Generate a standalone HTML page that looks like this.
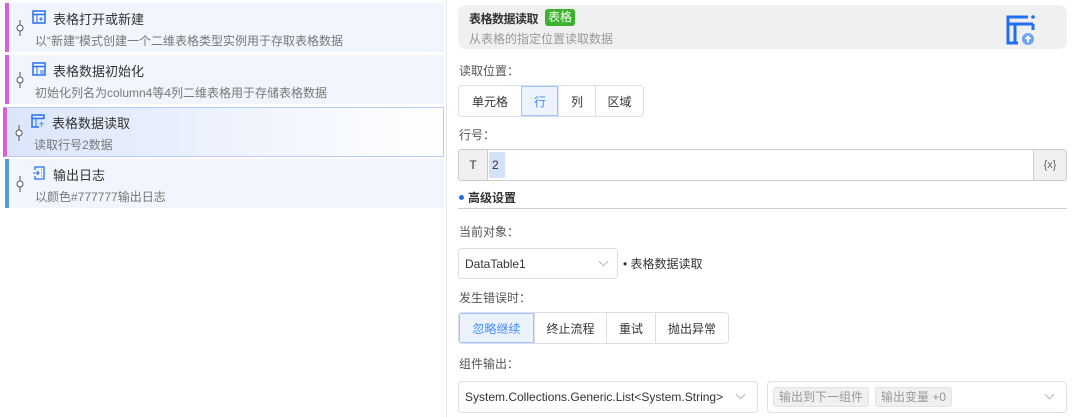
<!DOCTYPE html>
<html><head><meta charset="utf-8"><style>
*{box-sizing:border-box;margin:0;padding:0}
body{width:1073px;height:417px;overflow:hidden;background:#fff;font-family:"Liberation Sans","Noto Sans CJK SC",sans-serif;font-size:12px;color:#333;position:relative}
.item{position:absolute;left:5px;width:439px;height:49px;background:#f1f5fd;border-left:4px solid #d562d8}
.item .t{position:absolute;left:44px;top:6px;font-size:13px;color:#333}
.item .d{position:absolute;left:26px;top:29px;font-size:12px;color:#777}
.item .ic{position:absolute;left:23px;top:7px;width:14px;height:14px}
.pin{position:absolute;left:7px;top:17px;width:8px;height:16px}
.sel{background:linear-gradient(90deg,#dbe6fb,#fff);border:1px solid #b8c9f3;border-left:4px solid #d562d8}
.abs{position:absolute}
.lbl{position:absolute;left:459px;font-size:12px;color:#555}
.box{position:absolute;border:1px solid #dcdfe6;border-radius:4px;background:#fff}
.seg{position:absolute;display:flex;border:1px solid #dcdfe6;border-radius:4px;overflow:hidden;background:#fff}
.seg div{flex:none;border-left:1px solid #dcdfe6;display:flex;align-items:center;justify-content:center;font-size:12px;color:#333}
.seg div:first-child{border-left:none}
.seg .on{background:#ecf3ff;color:#3f8cff;outline:1px solid #a0c4ff;outline-offset:-1px}
.chev{position:absolute;width:7px;height:7px;border-right:1px solid #bbb;border-bottom:1px solid #bbb;transform:rotate(45deg)}
.tag{position:absolute;background:#f0f0f0;border:1px solid #e2e2e2;border-radius:3px;color:#999;font-size:12px;height:20px;line-height:18px;text-align:center;white-space:nowrap}
</style></head><body>
<div style="position:absolute;left:446px;top:0;width:1px;height:417px;background:#e8e8e8"></div>

<div class="item" style="top:3px">
<svg class="pin" viewBox="0 0 8 16"><line x1="4" y1="0" x2="4" y2="16" stroke="#555"/><circle cx="4" cy="8" r="3" fill="#fff" stroke="#555"/></svg>
<svg class="ic" viewBox="0 0 14 14"><rect x="1" y="1" width="12" height="12" fill="none" stroke="#2a6ef0" stroke-width="1.5"/><line x1="1" y1="4.5" x2="13" y2="4.5" stroke="#2a6ef0" stroke-width="1.5"/><line x1="5" y1="4.5" x2="5" y2="13" stroke="#2a6ef0"/><path d="M7 9h4M9 7v4" stroke="#2a6ef0"/></svg>
<div class="t">表格打开或新建</div><div class="d">以“新建”模式创建一个二维表格类型实例用于存取表格数据</div></div>

<div class="item" style="top:55px">
<svg class="pin" viewBox="0 0 8 16"><line x1="4" y1="0" x2="4" y2="16" stroke="#555"/><circle cx="4" cy="8" r="3" fill="#fff" stroke="#555"/></svg>
<svg class="ic" viewBox="0 0 14 14"><rect x="1" y="1" width="12" height="12" fill="none" stroke="#2a6ef0" stroke-width="1.5"/><line x1="1" y1="4.5" x2="13" y2="4.5" stroke="#2a6ef0" stroke-width="1.5"/><line x1="5" y1="4.5" x2="5" y2="13" stroke="#2a6ef0"/><rect x="8" y="8" width="4" height="4" fill="#8ab4f8"/></svg>
<div class="t">表格数据初始化</div><div class="d">初始化列名为column4等4列二维表格用于存储表格数据</div></div>

<div class="item sel" style="top:107px;height:50px;left:3px;width:441px">
<svg class="pin" viewBox="0 0 8 16" style="left:8px"><line x1="4" y1="0" x2="4" y2="16" stroke="#555"/><circle cx="4" cy="8" r="3" fill="#fff" stroke="#555"/></svg>
<svg class="ic" viewBox="0 0 14 14" style="left:24px;top:6px"><path d="M13 5V1H1v12h7" fill="none" stroke="#2a6ef0" stroke-width="1.5"/><line x1="1" y1="4.5" x2="13" y2="4.5" stroke="#2a6ef0" stroke-width="1.5"/><line x1="5" y1="4.5" x2="5" y2="13" stroke="#2a6ef0"/><path d="M10.5 13V8.5M8.5 10.5l2-2 2 2" stroke="#5a9af5" fill="none"/></svg>
<div class="t" style="left:45px;top:5px">表格数据读取</div><div class="d" style="left:27px;top:28px">读取行号2数据</div></div>

<div class="item" style="top:159px;border-left-color:#5b9ad8">
<svg class="pin" viewBox="0 0 8 16"><line x1="4" y1="0" x2="4" y2="16" stroke="#555"/><circle cx="4" cy="8" r="3" fill="#fff" stroke="#555"/></svg>
<svg class="ic" viewBox="0 0 14 14"><path d="M3 4V1h9v12H3v-3" fill="none" stroke="#2a6ef0" stroke-width="1.3"/><path d="M1 7h6M5 5l2 2-2 2M9 4h1M9 7h1M9 10h1" stroke="#2a6ef0" fill="none"/></svg>
<div class="t">输出日志</div><div class="d">以颜色#777777输出日志</div></div>

<div class="abs" style="left:458px;top:5px;width:609px;height:44px;background:#f0f0f0;border-radius:8px"></div>
<div class="abs" style="left:469px;top:10px;font-size:12px;font-weight:bold;color:#333;letter-spacing:-0.5px">表格数据读取</div>
<div class="abs" style="left:545px;top:9px;background:#3cb22e;color:#fff;font-size:12px;height:17px;line-height:17px;padding:0 3px;border-radius:3px">表格</div>
<div class="abs" style="left:469px;top:30px;font-size:12px;color:#999">从表格的指定位置读取数据</div>
<svg class="abs" style="left:1006px;top:14px" width="31" height="31" viewBox="0 0 31 31"><path d="M22 3H2v26h10" fill="none" stroke="#1f6ff5" stroke-width="3"/><line x1="2" y1="10" x2="27" y2="10" stroke="#1f6ff5" stroke-width="3"/><line x1="9" y1="10" x2="9" y2="29" stroke="#1f6ff5" stroke-width="3"/><circle cx="27" cy="3" r="1.8" fill="#1f6ff5"/><line x1="27" y1="10" x2="27" y2="16" stroke="#1f6ff5" stroke-width="3"/><circle cx="22" cy="25" r="6" fill="#6ea2f7"/><path d="M22 28.5v-6M19.5 25l2.5-2.5 2.5 2.5" stroke="#fff" stroke-width="1.8" fill="none"/></svg>

<div class="lbl" style="top:62px">读取位置：</div>
<div class="seg" style="left:458px;top:85px;height:32px">
<div style="width:62px">单元格</div><div class="on" style="width:37px">行</div><div style="width:37px">列</div><div style="width:48px">区域</div></div>

<div class="lbl" style="top:126px">行号：</div>
<div class="abs" style="left:458px;top:149px;width:609px;height:32px;border:1px solid #ccc;border-radius:3px;background:#fff;overflow:hidden">
<div class="abs" style="left:0;top:0;width:29px;height:30px;background:#f0f0f0;border-right:1px solid #ccc;text-align:center;line-height:30px;color:#333">T</div>
<div class="abs" style="left:30px;top:2px;width:16px;height:26px;background:#d4e2f8;line-height:26px;padding-left:3px;color:#333;font-size:12px">2</div>
<div class="abs" style="right:0;top:0;width:33px;height:30px;background:#f0f0f0;border-left:1px solid #ccc;text-align:center;line-height:30px;color:#666;font-size:11px">{x}</div></div>

<div class="abs" style="left:459px;top:195px;width:5px;height:5px;border-radius:50%;background:#1f6ff5"></div>
<div class="abs" style="left:468px;top:189px;font-size:12px;font-weight:bold;color:#333">高级设置</div>
<div class="abs" style="left:458px;top:208px;width:609px;height:1px;background:#ccc"></div>

<div class="lbl" style="top:223px">当前对象：</div>
<div class="box" style="left:458px;top:248px;width:160px;height:31px"><span class="abs" style="left:6px;top:8px;color:#333">DataTable1</span><div class="chev" style="left:141px;top:9px"></div></div>
<div class="abs" style="left:623px;top:255px;color:#333;font-size:12px">• 表格数据读取</div>

<div class="lbl" style="top:289px">发生错误时：</div>
<div class="seg" style="left:458px;top:312px;height:32px">
<div class="on" style="width:75px">忽略继续</div><div style="width:72px">终止流程</div><div style="width:49px">重试</div><div style="width:73px">抛出异常</div></div>

<div class="lbl" style="top:355px">组件输出：</div>
<div class="box" style="left:458px;top:381px;width:300px;height:32px"><span class="abs" style="left:6px;top:8px;color:#333">System.Collections.Generic.List&lt;System.String&gt;</span><div class="chev" style="left:278px;top:9px"></div></div>
<div class="box" style="left:767px;top:381px;width:300px;height:32px">
<div class="tag" style="left:5px;top:5px;width:96px">输出到下一组件</div><div class="tag" style="left:107px;top:5px;width:77px">输出变量 +0</div>
<div class="chev" style="left:278px;top:9px"></div></div>
</body></html>
